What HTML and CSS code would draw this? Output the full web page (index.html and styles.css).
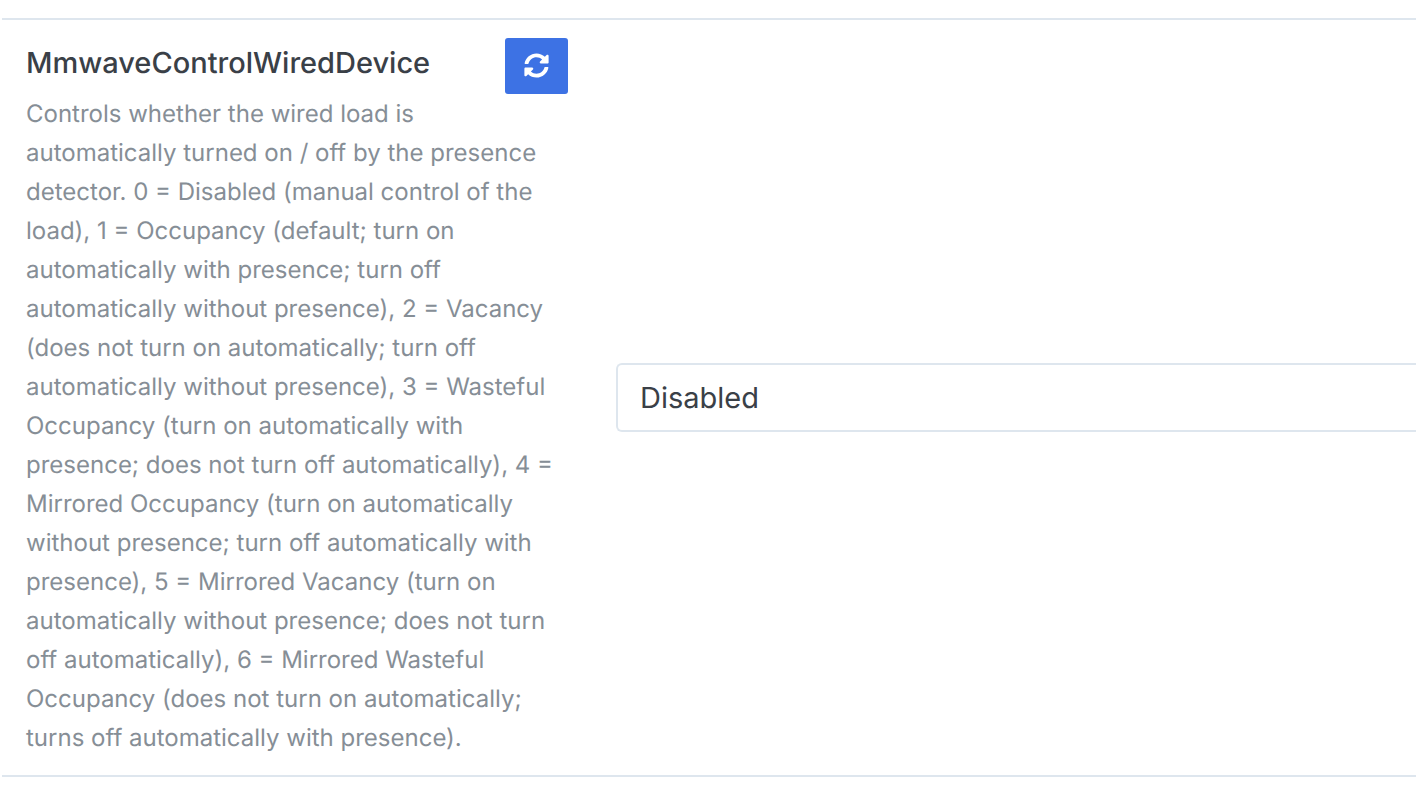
FILE: index.html
```html
<!DOCTYPE html>
<html lang="en">
<head>
<meta charset="utf-8">
<title>MmwaveControlWiredDevice</title>
<link rel="stylesheet" href="styles.css">
</head>
<body>
<section class="row">
  <div class="info">
    <div class="info-head">
      <h3 class="title">MmwaveControlWiredDevice</h3>
      <button class="refresh" type="button" aria-label="Refresh">
        <svg class="refresh-icon" viewBox="0 0 512 512" aria-hidden="true"><path fill="currentColor" d="M370.72 133.28C339.458 104.008 298.888 87.962 255.848 88c-77.458.068-144.328 53.178-162.791 126.85-1.344 5.363-6.122 9.15-11.651 9.15H24.103c-7.498 0-13.194-6.807-11.807-14.176C33.933 94.924 134.813 8 256 8c66.448 0 126.791 26.136 171.315 68.685L463.03 40.97C478.149 25.851 504 36.559 504 57.941V192c0 13.255-10.745 24-24 24H345.941c-21.382 0-32.09-25.851-16.971-40.971l41.75-41.749zM32 296h134.059c21.382 0 32.09 25.851 16.971 40.971l-41.75 41.75c31.262 29.273 71.835 45.319 114.876 45.28 77.418-.07 144.315-53.144 162.787-126.849 1.344-5.363 6.122-9.15 11.651-9.15h57.304c7.498 0 13.194 6.807 11.807 14.176C478.067 417.076 377.187 504 256 504c-66.448 0-126.791-26.136-171.315-68.685L48.97 471.03C33.851 486.149 8 475.441 8 454.059V320c0-13.255 10.745-24 24-24z"/></svg>
      </button>
    </div>
    <p class="desc">Controls whether the wired load is automatically turned on / off by the presence detector. 0 = Disabled (manual control of the load), 1 = Occupancy (default; turn on automatically with presence; turn off automatically without presence), 2 = Vacancy (does not turn on automatically; turn off automatically without presence), 3 = Wasteful Occupancy (turn on automatically with presence; does not turn off automatically), 4 = Mirrored Occupancy (turn on automatically without presence; turn off automatically with presence), 5 = Mirrored Vacancy (turn on automatically without presence; does not turn off automatically), 6 = Mirrored Wasteful Occupancy (does not turn on automatically; turns off automatically with presence).</p>
  </div>
  <div class="control">
    <div class="select">Disabled</div>
  </div>
</section>
</body>
</html>
```

FILE: styles.css
```css
html, body {
  margin: 0;
  padding: 0;
  background: #fff;
}
body {
  padding-top: 18px;
  padding-left: 2px;
  font-family: Inter, "Liberation Sans", sans-serif;
  text-rendering: geometricPrecision;
}
.row {
  display: flex;
  align-items: center;
  padding: 18px 0;
  border-top: 2px solid #dee6ee;
  border-bottom: 2px solid #dee6ee;
}
.info {
  width: 542px;
  margin-left: 24px;
  flex: none;
}
.info-head {
  display: flex;
  justify-content: space-between;
  align-items: flex-start;
}
.title {
  margin: 7px 0 0;
  font-size: 29px;
  line-height: 36px;
  font-weight: 500;
  color: #3a4047;
}
.refresh {
  display: flex;
  align-items: center;
  justify-content: center;
  width: 63px;
  height: 56px;
  padding: 0;
  border: 0;
  border-radius: 3px;
  background: #3d72e4;
  color: #fff;
}
.refresh-icon {
  width: 25px;
  height: 25px;
  margin: 0 1px 1px 0;
}
.desc {
  margin: 0;
  font-size: 24px;
  line-height: 39px;
  color: #868e96;
}
.control {
  margin-left: 48px;
  flex: 1;
}
.select {
  box-sizing: border-box;
  height: 69px;
  padding: 0 22px;
  display: flex;
  align-items: center;
  font-size: 29px;
  color: #3a4047;
  border: 2px solid #dee6ee;
  border-right: 0;
  border-radius: 6px 0 0 6px;
}
```
